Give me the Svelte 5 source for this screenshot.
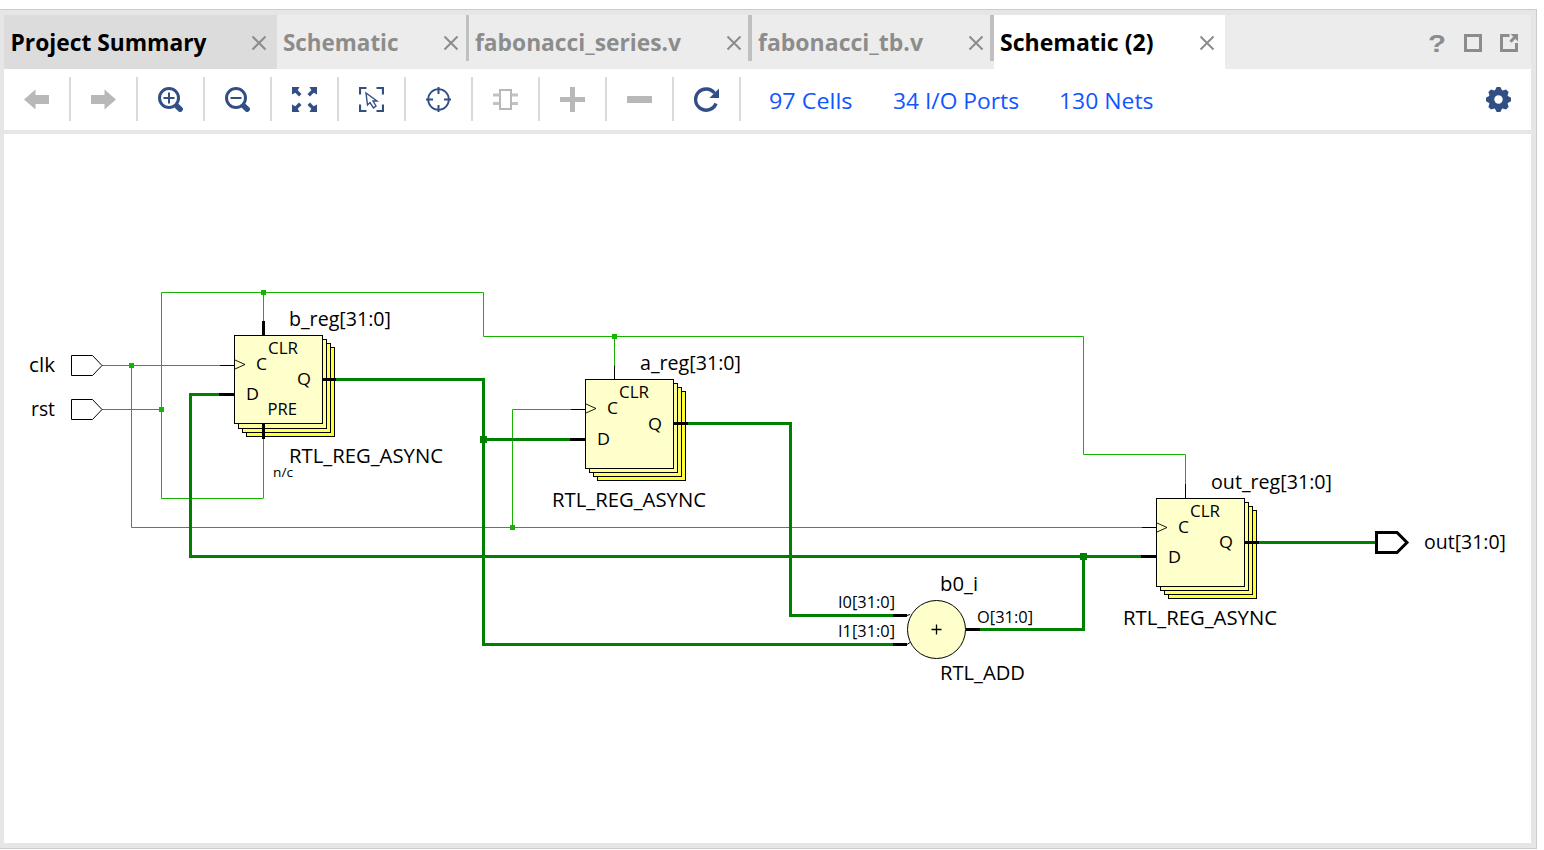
<script>
  const tabs = [
    { name: 'Project Summary', w: 273, pad: 6.5, len: 196, kind: 'hover', right: 10 },
    { name: 'Schematic', w: 189, pad: 6, len: 115.5, kind: '', right: 7 },
    { name: 'fabonacci_series.v', w: 282, pad: 6, len: 206, kind: 'bar', bar: 3, right: 6 },
    { name: 'fabonacci_tb.v', w: 242, pad: 6, len: 165, kind: 'bar', bar: 4, right: 6 },
    { name: 'Schematic (2)', w: 235, pad: 6, len: 153.5, kind: 'active bar', bar: 4, right: 10 }
  ];
  const tools = ['back', 'forward', 'zoomin', 'zoomout', 'fit', 'select', 'target', 'cell', 'plus', 'minus', 'reload'];
  const stats = [
    { text: '97 Cells', len: 83.5, w: 123.5 },
    { text: '34 I/O Ports', len: 126, w: 166.5 },
    { text: '130 Nets', len: 94.5, w: 100 }
  ];
  const fills = ['#ffff33', '#ffff66', '#ffff99', '#ffffcc'];
  const regs = [
    { x: 234.5, y: 335.5, extra: 1, h: 88 },
    { x: 585.5, y: 379.5, extra: 0, h: 89 },
    { x: 1156.5, y: 498.5, extra: 0, h: 88 }
  ];
  const thin = [
    'M102 365.5H221M131.5 365.5V527.5H1143M512.5 527.5V409.5H572',
    'M102 409.5H161.5M263.5 498.5H161.5V292.5H483.5V336.5H1083.5V454.5H1185.5V485M263.5 292.5V321M263.5 439V498M614.5 336.5V366'
  ];
  const thick = [
    'M219 394.5H190.5V556.5H1142M335 379.5H483.5V644.5H894M483.5 439.5H571',
    'M687 423.5H790.5V615.5H894M979 629.5H1083.5V556.5M1258 542.5H1376'
  ];
  const labels = [
    ['clk', 29, 372, 20, 26], ['rst', 31, 416, 20, 24],
    ['b_reg[31:0]', 289, 326, 20, 102], ['RTL_REG_ASYNC', 289, 463, 20, 154], ['n/c', 273, 477, 12.5, 20],
    ['CLR', 268, 354, 16, 30], ['C', 256, 370, 16, 11], ['Q', 297, 385, 16, 14], ['D', 246, 400, 16, 13], ['PRE', 267.5, 415, 16, 29.5],
    ['a_reg[31:0]', 640, 370, 20, 101], ['RTL_REG_ASYNC', 552, 507, 20, 154],
    ['CLR', 619, 398, 16, 30], ['C', 607, 414, 16, 11], ['Q', 648, 430, 16, 14], ['D', 597, 445, 16, 13],
    ['out_reg[31:0]', 1211, 489, 20, 121], ['RTL_REG_ASYNC', 1123, 625, 20, 154],
    ['CLR', 1190, 517, 16, 30], ['C', 1178, 533, 16, 11], ['Q', 1219, 548, 16, 14], ['D', 1168, 563, 16, 13],
    ['out[31:0]', 1424, 549, 20, 82],
    ['b0_i', 940, 591, 20, 38], ['RTL_ADD', 940, 680, 20, 85],
    ['I0[31:0]', 838, 608, 16, 57], ['I1[31:0]', 838, 637, 16, 57], ['O[31:0]', 977, 623, 16, 56]
  ];
</script>

<div class="window">
  <header class="tabs">
    {#each tabs as t}
      <div class="tab {t.kind}" style="width:{t.w}px;--bar:{t.bar ?? 0}px;padding-right:{t.right}px">
        <svg class="label" width={t.len + t.pad + 1} height="54"><text x={t.pad} y="36" textLength={t.len} lengthAdjust="spacingAndGlyphs">{t.name}</text></svg>
        <svg class="close" width="16" height="16" viewBox="0 0 16 16"><path d="M1.500 1.500L14.500 14.500M14.500 1.500L1.500 14.500" /></svg>
      </div>
    {/each}
    <div class="winbtns">
      <svg width="100" height="38" viewBox="0 -7 100 38">
        <text x="4" y="21" font-size="24.500" textLength="18" lengthAdjust="spacingAndGlyphs">?</text>
        <path d="M41.500 4.500h15v15h-15z" fill="none" stroke="#8c8c8c" stroke-width="3" />
        <path d="M85.500 4.500H77.500V19.500H92.500V12" fill="none" stroke="#8c8c8c" stroke-width="3" />
        <path d="M86.500 10.800L91.500 5.500" stroke="#8c8c8c" stroke-width="3" />
        <path d="M86.500 3H94V10.500Z" fill="#8c8c8c" />
      </svg>
    </div>
  </header>

  <nav class="toolbar">
    {#each tools as tool}
      <div class="tool">
        <svg width="25" height="25" viewBox="0.5 0.5 25 25">
          {#if tool === 'back'}
            <path class="dim" d="M0.500 13L12 3V8.500H25.500V17.500H12V23Z" />
          {:else if tool === 'forward'}
            <path class="dim" d="M25.500 13L14 3V8.500H0.500V17.500H14V23Z" />
          {:else if tool === 'zoomin' || tool === 'zoomout'}
            <circle class="ln" cx="11.500" cy="11.500" r="9.500" stroke-width="3" />
            <path class="ln" d="M6 11.500H17" stroke-width="2" />
            {#if tool === 'zoomin'}<path class="ln" d="M11.500 6V17" stroke-width="2" />{/if}
            <path class="ln" d="M19.800 20L22.700 22.700" stroke-width="5.500" stroke-linecap="round" />
          {:else if tool === 'fit'}
            {#each ['', 'matrix(-1 0 0 1 26 0)', 'matrix(1 0 0 -1 0 26)', 'matrix(-1 0 0 -1 26 26)'] as m}
              <path class="fl" d="M0.500 0.500H8L6.200 3.800L10 7.500L7.500 10L3.800 6.200L0.500 8Z" transform={m} />
            {/each}
          {:else if tool === 'select'}
            <path class="ln" d="M1.500 8V1.500H8M18 1.500H24.500V8M24.500 18V24.500H18M8 24.500H1.500V18" stroke-width="2.200" />
            <path class="ln" d="M7.500 6.500L9 18.500L11.500 16L15 21.500L17.500 19.500L14.500 14.500H18.500Z" stroke-width="1.400" />
          {:else if tool === 'target'}
            <circle class="ln" cx="13" cy="13" r="10.300" stroke-width="1.800" />
            <path class="ln" d="M13 0.500V7.500M13 18.500V25.500M0.500 13H7.500M18.500 13H25.500" stroke-width="2" />
          {:else if tool === 'cell'}
            <path d="M7.500 3.500H18.500V22.500H7.500Z" fill="none" stroke="#b8b8b8" stroke-width="2" />
            <path d="M0.500 8.500H7M0.500 17H7M19 8.500H25.500M19 17H25.500" stroke="#c2c2c2" stroke-width="2.800" />
          {:else if tool === 'plus'}
            <path class="dim" d="M0.500 10.500H10.500V0.500H15.500V10.500H25.500V15.500H15.500V25.500H10.500V15.500H0.500Z" />
          {:else if tool === 'minus'}
            <path class="dim" d="M0.500 9.500H25.500V16.500H0.500Z" />
          {:else}
            <path class="ln" d="M21 6.500A10.600 10.600 0 1 0 22.500 17" stroke-width="3.400" />
            <path class="fl" d="M25.500 2V11.500H16Z" />
          {/if}
        </svg>
      </div>
    {/each}
    <div class="stats">
      {#each stats as s}
        <svg width={s.w} height="60"><text x="0" y="40" textLength={s.len} lengthAdjust="spacingAndGlyphs">{s.text}</text></svg>
      {/each}
    </div>
    <svg class="gear" width="25" height="25" viewBox="-12.5 -12.5 25 25">
      {#each [0, 45, 90, 135] as a}
        <path class="fl" d="M-4 -8.500L-1.800 -12.500H1.800L4 -8.500V8.500L1.800 12.500H-1.800L-4 8.500Z" transform="rotate({a})" />
      {/each}
      <circle class="fl" r="9.500" />
      <circle r="4.200" fill="#fff" />
    </svg>
  </nav>

  <main>
    <svg class="schematic" width="1527" height="709" viewBox="4 134 1527 709">
      {#each thin as d}<path {d} class="thin" />{/each}
      {#each thick as d}<path {d} class="thick" />{/each}
      {#each [[131, 365], [161, 409], [263, 292], [614, 336], [512, 527]] as [x, y]}
        <rect x={x - 2} y={y - 2} width="5" height="5" fill="#14b400" />
      {/each}
      {#each [[483, 439], [1083, 556]] as [x, y]}
        <rect x={x - 3} y={y - 3} width="7" height="7" fill="#008000" />
      {/each}
      {#each regs as r}
        {#each fills as f, i}
          <rect x={r.x + 12 - i * 4} y={r.y + 12 - i * 4} width="88" height={r.h + (i < 3 ? r.extra : 0)} fill={f} class="edge" />
        {/each}
      {/each}
      <path class="fine" d="M235 360L245 364.500L235 369M586 404L596 408.500L586 413M1157 523L1167 527.500L1157 532" />
      <path class="edge" d="M220 365.500H234M571 409.500H585M1142 527.500H1156M614.500 366V379M1185.500 484V498" />
      <path class="pin" d="M219 394.500H234M570 439.500H585M1141 556.500H1156M263.500 321V335M263.500 424V439M323 379.500H336M674 423.500H688M1245 542.500H1259M893 615.500H907M893 644.500H907M966 629.500H980" />
      <path class="edge" d="M907 615.500L910 614.500M907 644.500L910 642.500" fill="none" />
      <circle cx="936.500" cy="629.500" r="29" fill="#ffffcc" stroke="#000" />
      <path class="edge" d="M931.500 629.500H941.500M936.500 624.500V634.500" stroke-width="1.300" />
      <path class="port" d="M71.500 355.500H92.500L102 365.500L92.500 375.500H71.500ZM71.500 399.500H92.500L102 409.500L92.500 419.500H71.500Z" />
      <path class="port out" d="M1376.500 532.500H1397L1407 542.500L1397 552.500H1376.500Z" />
      {#each labels as [t, x, y, size, len]}
        <text {x} {y} font-size={size} textLength={len} lengthAdjust="spacingAndGlyphs">{t}</text>
      {/each}
    </svg>
  </main>
</div>

<style>
  :global(body) { margin: 0; background: #fff; overflow: hidden; }
  .window {
    box-sizing: border-box; width: 1537px; height: 840px; margin-top: 9px;
    padding: 5px 5px 5px 4px; background: #e6e6e6;
    border: 1px solid #ccc; border-left: 0;
    font-family: "Open Sans", "Noto Sans", sans-serif;
  }
  svg { display: block; flex: none; }
  .tabs { display: flex; height: 54px; background: #ececec; }
  .tab { position: relative; box-sizing: border-box; display: flex; align-items: center; justify-content: space-between; }
  .tab.bar { padding-left: var(--bar); }
  .tab.bar::before { content: ""; position: absolute; left: 0; top: 0; width: var(--bar); height: 46px; background: #c0c0c0; }
  .tab.hover { background: #dcdcdc; }
  .tab.active { background: linear-gradient(90deg, #ececec 4px, #fff 4px); }
  .label text { font-size: 22.500px; font-weight: 700; fill: #8c8c8c; }
  .hover .label text, .active .label text { fill: #000; }
  .close { margin-top: 2px; }
  .close path { stroke: #8c8c8c; stroke-width: 2; fill: none; }
  .winbtns { margin-left: auto; padding: 9px 7px 0 0; }
  .winbtns text { font-weight: 700; fill: #8c8c8c; font-family: "Liberation Sans", sans-serif; }
  .toolbar { display: flex; height: 61px; background: #fff; }
  .tool { box-sizing: border-box; width: 67px; height: 44px; margin-top: 8px; padding-top: 1px; border-right: 2px solid #dadada; display: flex; align-items: center; justify-content: center; }
  .dim { fill: #b8b8b8; }
  .ln { fill: none; stroke: #324f85; }
  .fl { fill: #324f85; }
  .stats { display: flex; padding-left: 28px; }
  .stats text { font-size: 22.500px; fill: #0f56ff; }
  .gear { margin: 18px 20px 0 auto; }
  main { margin-top: 4px; height: 709px; background: #fff; }
  .thin { fill: none; stroke: #14b400; stroke-width: 1; }
  .thick { fill: none; stroke: #008000; stroke-width: 3; }
  .edge { stroke: #000; }
  .fine { fill: none; stroke: #000; stroke-width: 0.900; }
  .pin { fill: none; stroke: #000; stroke-width: 3; }
  .port { fill: #fff; stroke: #000; }
  .out { stroke-width: 3; }
</style>
